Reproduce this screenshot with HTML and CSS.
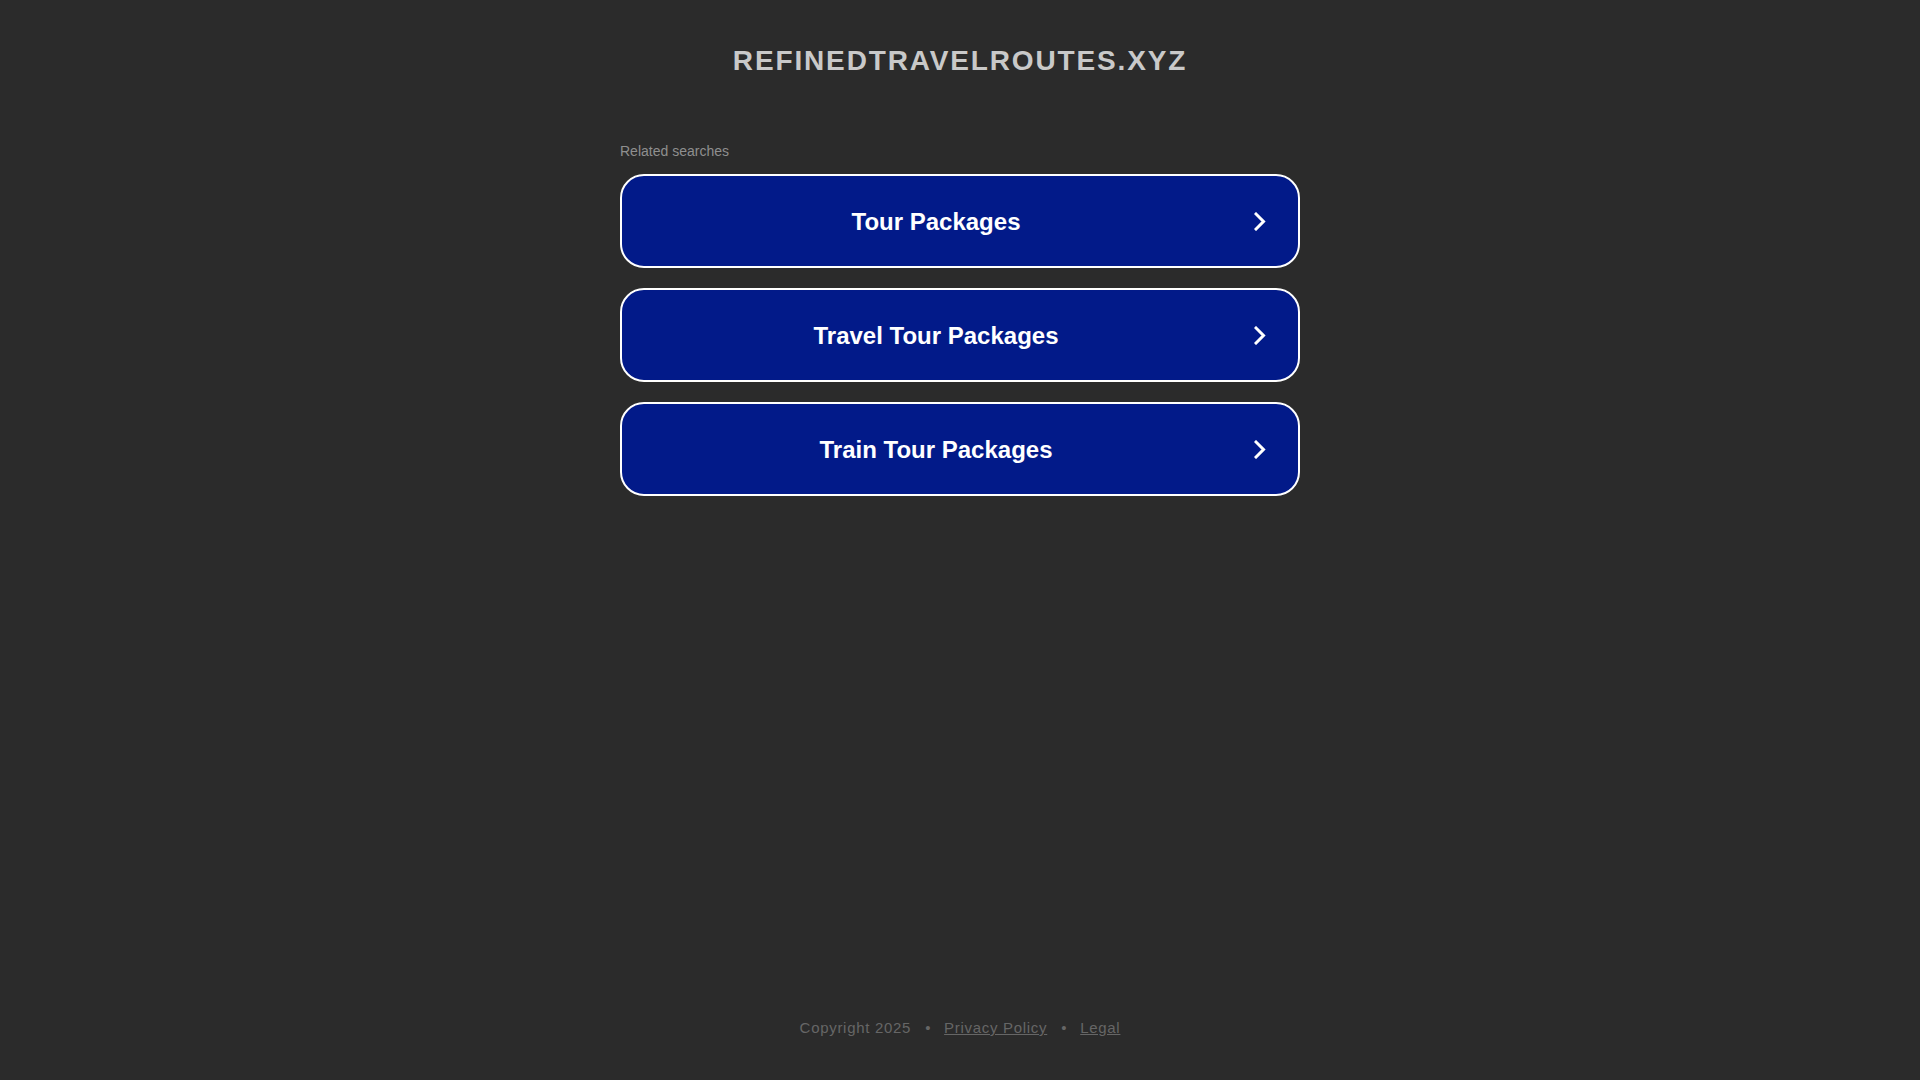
FILE: index.html
```html
<!DOCTYPE html>
<html lang="en">
<head>
<meta charset="utf-8">
<title>refinedtravelroutes.xyz</title>
<link rel="stylesheet" href="styles.css">
</head>
<body>
<div class="page">
  <header class="header">
    <h1 class="domain">REFINEDTRAVELROUTES.XYZ</h1>
  </header>
  <main class="main">
    <div class="related">Related searches</div>
    <ul class="links">
      <li><a class="link" href="#"><span class="link-text">Tour Packages</span><svg class="chev" width="12" height="19" viewBox="0 0 12 19"><polyline points="2,2 9.5,9.5 2,17" fill="none" stroke="#fff" stroke-width="3" stroke-linecap="square"/></svg></a></li>
      <li><a class="link" href="#"><span class="link-text">Travel Tour Packages</span><svg class="chev" width="12" height="19" viewBox="0 0 12 19"><polyline points="2,2 9.5,9.5 2,17" fill="none" stroke="#fff" stroke-width="3" stroke-linecap="square"/></svg></a></li>
      <li><a class="link" href="#"><span class="link-text">Train Tour Packages</span><svg class="chev" width="12" height="19" viewBox="0 0 12 19"><polyline points="2,2 9.5,9.5 2,17" fill="none" stroke="#fff" stroke-width="3" stroke-linecap="square"/></svg></a></li>
    </ul>
  </main>
  <footer class="footer">
    <span>Copyright 2025</span><span class="dot">•</span><a href="#">Privacy Policy</a><span class="dot">•</span><a href="#">Legal</a>
  </footer>
</div>
</body>
</html>
```

FILE: styles.css
```css
html, body {
  margin: 0;
  padding: 0;
  background: #2b2b2b;
}
body {
  font-family: "Liberation Sans", Arial, sans-serif;
}
.page {
  height: 1080px;
  display: flex;
  flex-direction: column;
  align-items: center;
}
.header {
  padding-top: 45px;
}
.domain {
  margin: 0;
  font-size: 28px;
  line-height: 32px;
  font-weight: bold;
  color: #c9c9c9;
  letter-spacing: 1.85px;
  text-align: center;
}
.main {
  width: 680px;
  margin-top: 66px;
}
.related {
  font-size: 14px;
  line-height: 16px;
  color: #8f8f8f;
  margin-bottom: 15px;
}
.links {
  list-style: none;
  margin: 0;
  padding: 0;
  display: flex;
  flex-direction: column;
  gap: 20px;
}
.link {
  box-sizing: border-box;
  height: 94px;
  display: flex;
  align-items: center;
  padding: 0 32px 0 16px;
  background: #021a89;
  border: 2px solid #ffffff;
  border-radius: 24px;
  text-decoration: none;
  color: #ffffff;
}
.link-text {
  flex: 1;
  text-align: center;
  font-size: 24px;
  font-weight: bold;
  margin-right: 20px;
  padding-top: 2px;
}
.chev {
  display: block;
  flex: none;
}
.footer {
  margin-top: auto;
  padding-bottom: 43px;
  font-size: 15px;
  line-height: 18px;
  letter-spacing: 0.7px;
  color: #666666;
  display: flex;
}
.footer a {
  color: #666666;
  text-decoration: underline;
}
.dot {
  margin: 0 13px 0 14px;
}
```
